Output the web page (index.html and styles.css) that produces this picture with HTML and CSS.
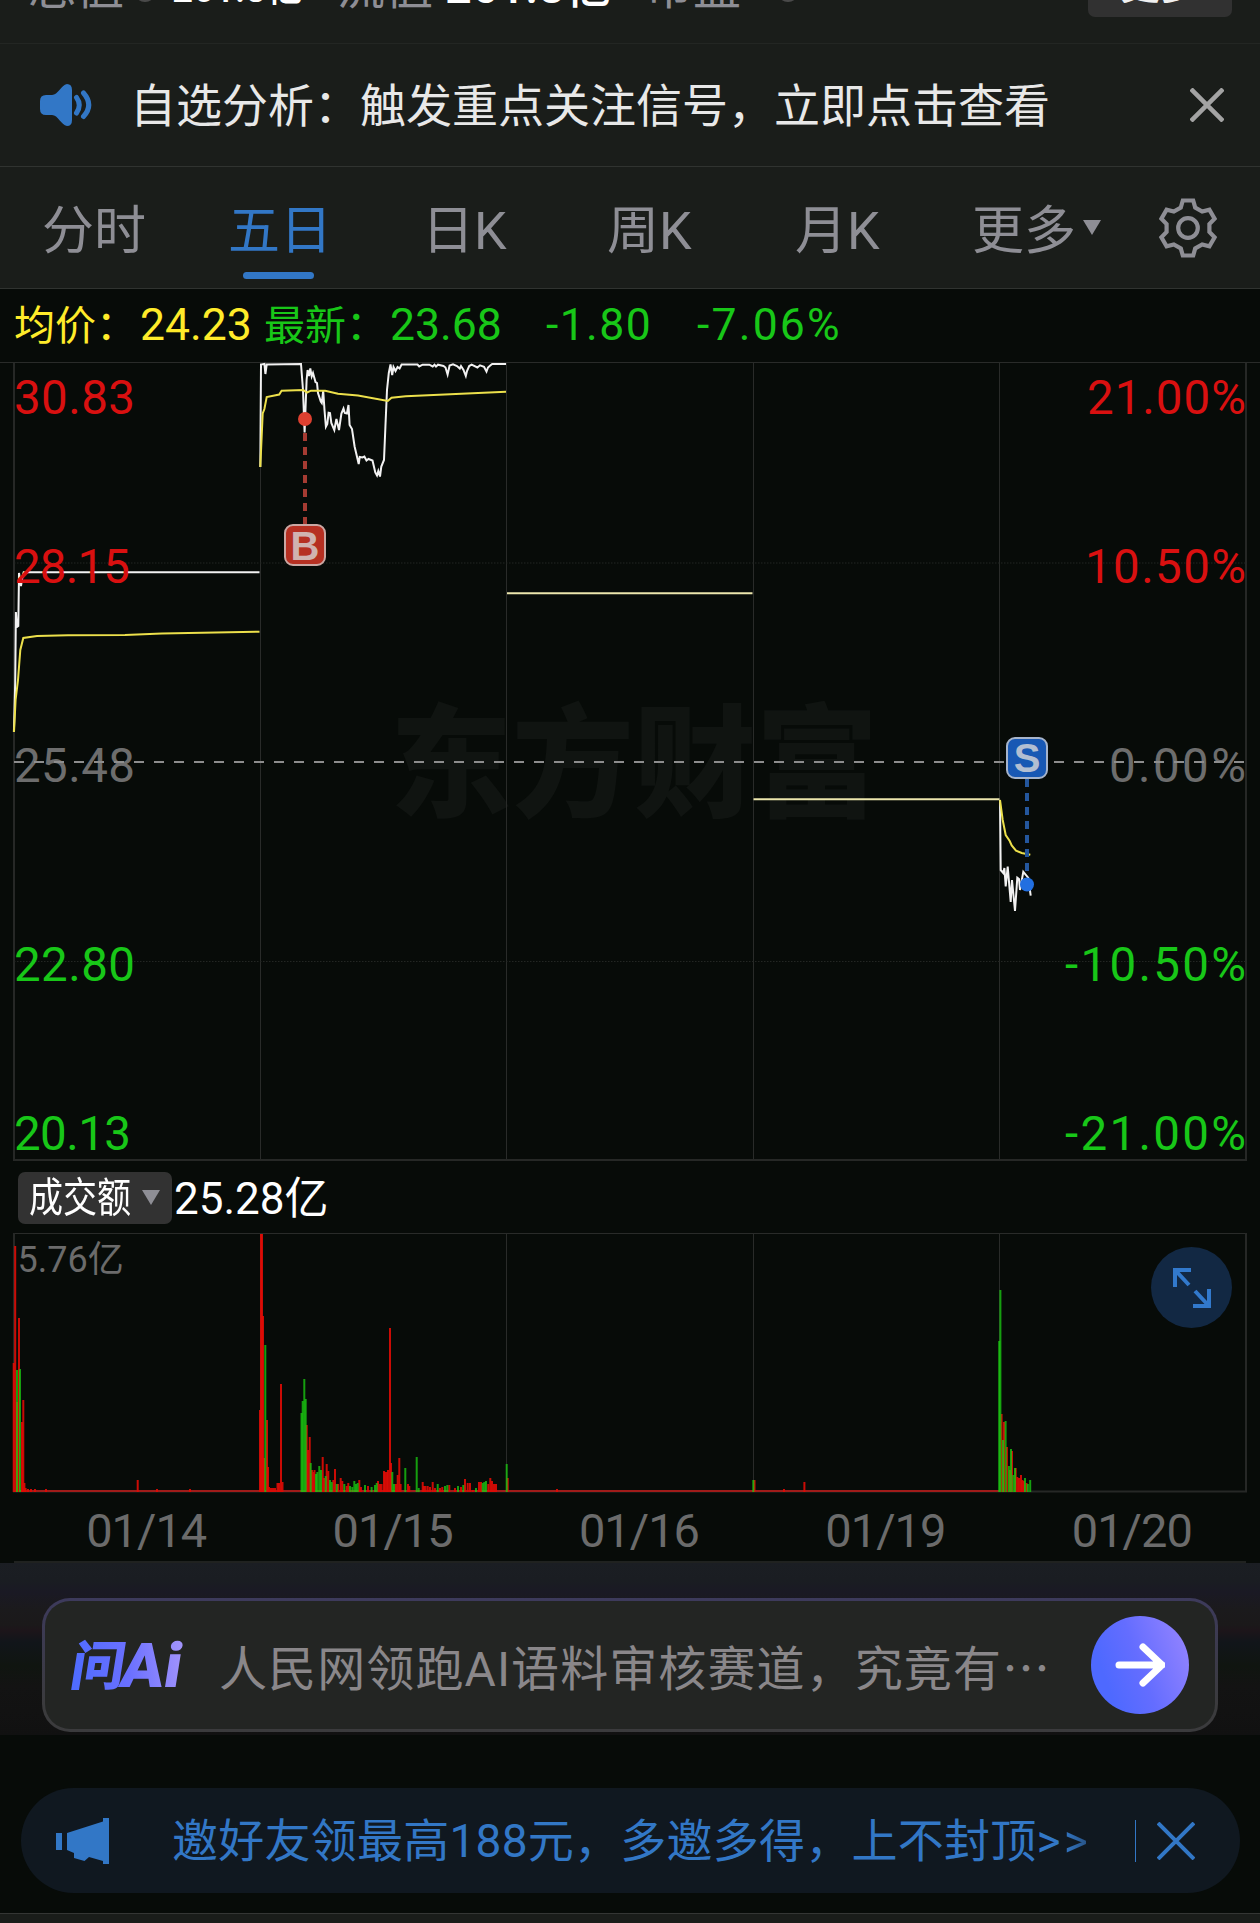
FILE: index.html
```html
<!DOCTYPE html>
<html lang="zh-CN">
<head>
  <meta charset="UTF-8">
  <title>五日分时</title>
  <link rel="stylesheet" href="styles.css">
</head>
<body>

<div class="summary">
  <span class="label">总值</span><i class="info"></i><b class="val small">261.8亿</b>
  <span class="label flow">流值</span><b class="val">261.8亿</b>
  <span class="label pe">市盈</span><i class="info last"></i>
  <span class="more-btn">更多</span>
</div>

<div class="notice">
  <svg class="speaker" viewBox="0 0 52 44" width="52" height="44">
    <path d="M6 12H12C18 12 21 2 27 1Q32 1 32 7V37Q32 43 27 43C21 42 18 32 12 32H6Q0 32 0 26V18Q0 12 6 12Z" fill="#3277c6"/>
    <path d="M36.500 14.500Q42 22 36.500 30M43.500 10Q54 22 43.500 33.500" fill="none" stroke="#3277c6" stroke-width="5" stroke-linecap="round"/>
  </svg>
  <span class="notice-text">自选分析：触发重点关注信号，立即点击查看</span>
  <svg class="close" viewBox="0 0 34 34" width="34" height="34"><path d="M1 1L33 33M33 1L1 33" stroke="#a3a3a3" stroke-width="4.5"/></svg>
</div>

<nav class="tabs">
  <span class="tab">分时</span>
  <span class="tab active">五日</span>
  <span class="tab">日K</span>
  <span class="tab">周K</span>
  <span class="tab">月K</span>
  <span class="tab more">更多<i class="caret"></i></span>
  <svg class="gear" viewBox="-30 -30 60 60" width="60" height="60" fill="none" stroke="#8e8e95" stroke-width="4.2">
    <path d="M-7.2 -20.5L-5.2 -27.5H5.2L7.2 -20.5L14.2 -16.5L21.4 -18.4L26.6 -9.4L21.4 -4V4L26.6 9.4L21.4 18.4L14.2 16.5L7.2 20.5L5.2 27.5H-5.2L-7.2 20.5L-14.2 16.5L-21.4 18.4L-26.6 9.4L-21.4 4V-4L-26.6 -9.4L-21.4 -18.4L-14.2 -16.5Z"/>
    <circle r="9.8"/>
  </svg>
</nav>

<div class="quote">
  <span class="avg">均价：<b>24.23</b></span>
  <span class="last-price">最新：<b>23.68</b></span>
  <span class="diff">-1.80</span>
  <span class="pct">-7.06%</span>
</div>

<svg class="price-chart" viewBox="0 362 1260 800" width="1260" height="800">
  <text class="watermark" x="390" y="807" textLength="488">东方财富</text>
  <!-- grid -->
  <g class="grid">
    <path d="M0 362.5H1260"/>
    <path d="M260.5 363V1160M506.5 363V1160M753.5 363V1160M999.5 363V1160"/>
    <path class="edge" d="M14 363V1160M1246 363V1160M13 1160H1247"/>
    <path class="dots" d="M14 563H1246M14 961.5H1246"/>
  </g>
  <g class="left-labels">
    <text class="up" x="14" y="414" textLength="121">30.83</text>
    <text class="flat" x="14" y="782" textLength="121">25.48</text>
    <text class="down" x="14" y="981" textLength="121">22.80</text>
    <text class="down" x="14" y="1150" textLength="117">20.13</text>
  </g>
  <g class="right-labels">
    <text class="up" x="1087" y="414" textLength="159">21.00%</text>
    <text class="up" x="1085" y="583" textLength="161">10.50%</text>
    <text class="flat" x="1109" y="782" textLength="137">0.00%</text>
    <text class="down" x="1065" y="981" textLength="181">-10.50%</text>
    <text class="down" x="1065" y="1150" textLength="181">-21.00%</text>
  </g>
  <path class="zero" d="M14 762H1246"/>
  <!-- price -->
  <g class="price">
    <polyline points="13.9,732 15.2,683 15.9,612 16.9,627 18.3,626 19,573 21,586 22.3,577 23.7,572.3 259.5,572.3"/>
    <polyline points="260.3,467 261,364.5 264.4,364 265.4,374 266.7,364.5 301,364 303,390 304.6,432.5 306.6,380 307.6,370 309,376 310.3,368.5 311.7,376.5 313,373 315.5,382 317,383 318,393 320.8,401.5 321.8,403 323.2,390.7 324.5,410 325.9,426.7 327.3,424 328.6,412.7 330,413 331.3,423 334.3,430 336.4,419 339,430 341.4,413.5 343.5,408.5 344.8,413 346.9,413.5 348.5,405 349.6,425 352,429 354.6,446.5 358.7,464 359.7,457 362.4,457.5 364.4,456.5 366.5,460.5 368.5,459 372.5,460.5 375.3,472.5 377,475.5 378.3,471 380,476.5 381.3,466.5 384,460 385.4,427 387,390 388.8,373 390.5,364.5 392.2,375 393.5,367 395.5,371 397.6,367 399.6,368.5 401.6,364.5 417.5,364.5 419.2,366.5 422.6,364.7 429.3,364.7 432.7,366.5 434.500,364.7 436,366.500 438,364.700 443.5,366 445.500,367.500 447.6,374.5 449.6,365.5 453,364.3 457,366 459.8,368.5 461,366 463.500,370 465.8,376 467,371 469.2,366 471.6,364.7 477.4,367.5 480,365.3 484,366.7 486.5,371.5 488,367.500 490.2,365.5 492.2,364 506,364"/>
    <polyline points="1000,800 1000.7,870 1003.3,873 1004.4,868 1005.7,886.5 1007.7,866.7 1010.7,902 1012,880 1015,911 1017.3,877.7 1019,879 1020,890 1023.3,871.7 1026,875 1028.3,878 1030.7,895.7"/>
  </g>
  <!-- average -->
  <g class="average">
    <polyline points="14,732 15.6,700 18,680 20.3,650 23.3,638 37,636 68,635.3 125,635 162,633.5 259.5,631.7"/>
    <polyline points="260.3,467 262.7,413.5 264.4,409 266.7,397 279.2,394.5 281.6,390.7 303.2,390 307,392.5 311,390.7 325.2,390.7 338,393.7 358,395.5 387.8,401 391.5,397.7 405.7,396.3 506,391.7"/>
    <polyline points="1000,800 1002.7,820 1005.7,835 1009.7,841 1011.7,845.5 1016,850.7 1021.7,853 1030.3,854.7"/>
  </g>
  <path class="limit" d="M507 593.3H752.5M753.5 799.3H999.5"/>
  <g class="left-labels">
    <text class="up" x="14" y="583" textLength="116">28.15</text>
  </g>
  <!-- trade marks -->
  <g class="buy">
    <path d="M305 433V524"/>
    <circle cx="305" cy="419" r="7"/>
    <rect x="285" y="525" width="40" height="40" rx="8"/>
    <text x="305" y="559.5">B</text>
  </g>
  <g class="sell">
    <path d="M1027 779V872"/>
    <circle cx="1027" cy="884.5" r="7"/>
    <rect x="1007" y="738" width="40" height="40" rx="8"/>
    <text x="1027" y="772">S</text>
  </g>
</svg>

<div class="vol-head">
  <span class="vol-select"><span class="vol-name">成交额</span><i class="caret"></i></span>
  <span class="vol-total">25.28亿</span>
</div>

<div class="vol-wrap">
  <svg class="vol-chart" viewBox="0 1233 1260 260" width="1260" height="260">
    <g class="grid">
      <path d="M13 1233.5H1247M260.5 1233V1491M506.5 1233V1491M753.5 1233V1491M999.5 1233V1491"/>
      <path class="edge" d="M14 1233V1492M1246 1233V1492M13 1491.5H1247"/>
    </g>
    <path class="vol-base" d="M14 1491H999"/>
    <g id="bars"></g>
    <text class="vol-max" x="17.500" y="1271.5">5.76亿</text>
  </svg>
  <span class="expand">
    <svg viewBox="0 0 40 40" width="40" height="40" fill="none" stroke="#3279cc" stroke-width="4">
      <path d="M19 2H3V19M3 2L17 17M21 38H37V21M37 38L23 23"/>
    </svg>
  </span>
</div>

<div class="dates">
  <span>01/14</span><span>01/15</span><span>01/16</span><span>01/19</span><span>01/20</span>
</div>

<div class="ai">
  <div class="ai-card">
    <svg class="ai-logo" viewBox="0 0 116 56" width="116" height="56">
      <defs>
        <linearGradient id="logoFill" gradientUnits="userSpaceOnUse" x1="0" y1="40" x2="116" y2="10">
          <stop offset="0" stop-color="#4f6cff"/><stop offset=".45" stop-color="#6a70ff"/><stop offset="1" stop-color="#ae9bfb"/>
        </linearGradient>
      </defs>
      <g transform="translate(9 0) skewX(-9)" fill="url(#logoFill)">
        <text class="logo-cn" x="-4" y="48" textLength="54" lengthAdjust="spacingAndGlyphs">问</text>
        <text class="logo-en" x="46" y="50" textLength="61" lengthAdjust="spacingAndGlyphs">Ai</text>
      </g>
    </svg>
    <span class="ai-text">人民网领跑AI语料审核赛道，究竟有<span class="dots3">…</span></span>
    <span class="ai-go">
      <svg viewBox="0 0 50 44" width="50" height="44" fill="none" stroke="#fff" stroke-width="7" stroke-linecap="round" stroke-linejoin="round"><path d="M4 22H47M28 4L47 22L28 40"/></svg>
    </span>
  </div>
</div>

<div class="banner">
  <svg class="horn" viewBox="0 0 54 46" width="54" height="46" fill="#3277c6"><path d="M0 15H6V32H0ZM11 15L47 3.5V0H53V46H47V43L33 39L28.500 43L18 40V35L11 32Z"/></svg>
  <span class="banner-text">邀好友领最高188元，多邀多得，上不封顶<span class="arrows">&gt;<span class="fade">&gt;</span></span></span>
  <i class="divider"></i>
  <svg class="banner-close" viewBox="0 0 38 38" width="38" height="38"><path d="M1 1L37 37M37 1L1 37" stroke="#3277c6" stroke-width="4"/></svg>
</div>

<div class="bottom-bar"></div>

<script>
// [x, height] of each bar, up = red, down = green
const BASE = 1492;
const up = [
  [13.7,129],[15.2,246],[17,90],[19,174],[22,70],[23.3,92],[24.4,9],[25.6,4],[28,3],[31,3],[35,3],[46,3],[137.7,12],[157,3],[190,3],
  [260,82],[261,258],[262,258],[263,176],[264,34],[267,72],[268,25],[269,5],[271,4],[273,4],[275,4],[277.5,9],[279,9],[281,108],[282.5,10],
  [306.7,67],[308,42],[309.7,55],[312,22],[313.3,20],[314.5,22],[322.7,35],[324,14],[326.7,28],[328.3,21],[333.3,12],[335,23],[338,8],[340.7,14],[342.3,11],
  [346.7,6],[348.3,9],[359.3,12],[361,5],[368,6],[378,11],[380,8],[381.6,8],[384,21],[385.3,20],[386.7,20],[388,22],[390,164],[391,29],[396,8],[397.7,17],
  [399.3,34],[400.6,8],[408,8],[409.3,6],[422.7,10],[424,6],[425.5,6],[427.7,6],[430,5],[432.7,10],[435,4],[440,4],[442.3,5],[449.3,7],[455,4],[461,5],[465,13],
  [467.7,9],[470,9],[472.7,2],[479,10],[481,10],[488.3,8],[490.3,14],[492,11],[494,8],[496,8],[507.7,14],[557,3],[754.5,12],[784,3],[804.4,10],
  [1001.6,78],[1004,70],[1006.9,45],[1010,22],[1012,41],[1015.7,24],[1017.3,15],[1019,14],[1021,17],[1022.4,12],[1023.7,11],[1026.5,9]
];
const down = [
  [17,122],[20,123],[265.3,147],[301.5,79],[302.7,91],[304.3,113],[305.7,93],[310.7,29],[316,18],[317.3,20],[319.3,26],[321,22],[325.7,16],[330,12],[331.7,10],
  [336.7,8],[344.3,8],[350,6],[352.3,5],[354.3,11],[356,8],[357.7,9],[365,7],[371.6,5],[375,7],[376.7,9],[392.3,20],[394,8],[405.3,24],[416.7,35],[418.7,4],
  [437.7,8],[445,6],[447.3,7],[458,6],[463.3,7],[476,4],[482.7,9],[484.3,10],[486,11],[506.7,28],[753.3,12],
  [999.2,151],[1000.4,202],[1003,52],[1005.6,71],[1008.9,26],[1011,43],[1013.3,17],[1015,24],[1025,14],[1027.8,8],[1030.2,12]
];

function draw(list, cls) {
  return list.map(([x, h]) => `<rect class="${cls}" x="${x - 1}" y="${BASE - h}" width="2" height="${h}"/>`).join('');
}
document.getElementById('bars').innerHTML = draw(up, 'bar-up') + draw(down, 'bar-down');
</script>

</body>
</html>
```

FILE: styles.css
```css
body {
  margin: 0;
  width: 1260px;
  background: #070b08;
  color: #8e8e95;
  font-family: Roboto, "Noto Sans CJK SC", sans-serif;
  overflow-x: hidden;
}
i { font-style: normal; }
b { font-weight: 400; }
svg { display: block; flex: none; }

/* cut off by the scroll position */
.summary {
  height: 44px;
  box-sizing: border-box;
  padding: 0 28px;
  display: flex;
  align-items: flex-start;
  background: #1a1d1a;
  border-bottom: 1px solid #232623;
  overflow: hidden;
  white-space: nowrap;
}
.summary > * {
  margin-top: -47px;
  line-height: 70px;
  flex: none;
}
.label { font-size: 48px; width: 96px; }
.info {
  width: 22px;
  height: 22px;
  margin: -20px 16px 0 10px;
  border-radius: 50%;
  background: #4a4a4a;
}
.val { width: 200px; color: #fff; font-weight: 500; font-size: 47px; margin-top: -48px; }
.val.small { width: 165px; font-size: 37px; margin-top: -45px; }
.flow { width: 108px; }
.info.last { margin-right: 0; margin-left: 36px; }
.summary .more-btn {
  box-sizing: border-box;
  width: 144px;
  height: 70px;
  margin-top: -53px;
  margin-left: auto;
  line-height: 78px;
  border-radius: 7px;
  background: #313131;
  color: #f0f0f0;
  font-size: 40px;
  font-weight: 500;
  text-align: center;
}

.notice {
  height: 123px;
  box-sizing: border-box;
  display: flex;
  align-items: center;
  padding: 0 36px 0 40px;
  background: #1a1d1a;
  border-bottom: 1px solid #303330;
}
.notice-text {
  flex: 1;
  margin-left: 38px;
  padding-bottom: 7px;
  color: #e8e8e8;
  font-size: 46px;
  white-space: nowrap;
}

.tabs {
  height: 122px;
  box-sizing: border-box;
  display: flex;
  align-items: center;
  padding: 0 42px;
  background: #1a1d1a;
  border-bottom: 1px solid #303330;
  font-size: 52px;
}
.tab {
  position: relative;
  width: 186px;
  height: 122px;
  line-height: 130px;
  white-space: nowrap;
}
.tab:nth-child(2) { width: 194px; }
.tab:nth-child(3) { width: 185px; }
.tab:nth-child(4) { width: 188px; }
.tab:nth-child(5) { width: 177px; }
.tab.active { color: #3277c6; }
.tab.active::after {
  content: "";
  position: absolute;
  left: 15px;
  bottom: 10px;
  width: 71px;
  height: 7px;
  border-radius: 4px;
  background: #3277c6;
}
.caret {
  display: inline-block;
  border: 9px solid transparent;
  border-top: 15px solid #8e8e95;
  border-bottom: 0;
}
.tab .caret { margin-left: 7px; vertical-align: 14px; }

.quote {
  height: 73px;
  display: flex;
  align-items: center;
  padding-left: 14px;
  font-size: 41px;
  line-height: 77px;
  color: #18c718;
}
.quote b, .diff, .pct { font-size: 44.500px; }
.quote b { margin-left: 3px; }
.avg { width: 250px; color: #ffeb2a; }
.last-price { width: 282px; }
.diff { width: 151px; letter-spacing: 1.400px; }
.pct { letter-spacing: 2.200px; }

.grid path { fill: none; stroke: #292b29; stroke-width: 1; }
.grid .edge { stroke-width: 2; stroke: #262826; }
.grid .dots { stroke: #232623; stroke-dasharray: 1.5 1.5; }
.watermark {
  font: 900 122px "Noto Sans CJK SC", sans-serif;
  fill: #101411;
}
.left-labels text, .right-labels text { font-size: 47.5px; }
.up { fill: #d91010; }
.down { fill: #18c718; }
.flat { fill: #6d6d6d; }
.zero { stroke: #8d8d8d; stroke-width: 2; stroke-dasharray: 10 10; }
.price polyline, .average polyline { fill: none; stroke-width: 2; }
.price polyline { stroke: #f2f2f2; }
.average polyline { stroke: #ece04b; }
.limit { stroke: #ece6ad; stroke-width: 2; }
.buy path, .sell path { stroke: #a53b32; stroke-width: 4; stroke-dasharray: 8 6; }
.buy circle { fill: #dd4030; }
.buy rect { fill: #b63022; stroke: #caa7a3; stroke-width: 2; }
.buy text, .sell text {
  font: 700 40px "Liberation Sans", sans-serif;
  text-anchor: middle;
  fill: #d0b3b0;
}
.sell path { stroke: #24579d; }
.sell circle { fill: #226fe0; }
.sell rect { fill: #1858b4; stroke: #a6b4cb; stroke-width: 2; }
.sell text { fill: #b2bed2; }

.vol-head {
  height: 71px;
  display: flex;
  align-items: center;
  padding-left: 18px;
}
.vol-select {
  width: 154px;
  height: 52px;
  display: flex;
  align-items: center;
  border-radius: 7px;
  background: #323232;
  color: #fff;
}
.vol-name {
  width: 112px;
  margin-left: 11px;
  font-size: 41px;
  line-height: 52px;
  white-space: nowrap;
  transform: scaleX(.83);
  transform-origin: 0 50%;
}
.vol-select .caret { margin-left: 1px; }
.vol-total {
  margin-left: 2px;
  padding-top: 3px;
  color: #fff;
  font-size: 44px;
  line-height: 52px;
  white-space: nowrap;
}

.vol-wrap { position: relative; height: 260px; }
.vol-base { stroke: #a01c1a; stroke-width: 2; }
.bar-up { fill: #e00b06; fill-opacity: .9; }
.bar-down { fill: #1bd012; fill-opacity: .75; }
.vol-max { font-size: 36px; fill: #6b6b6b; }
.expand {
  position: absolute;
  right: 28px;
  top: 14px;
  width: 81px;
  height: 81px;
  display: flex;
  align-items: center;
  justify-content: center;
  border-radius: 50%;
  background: #122843;
}

.dates {
  height: 68px;
  margin: 0 14px;
  display: grid;
  grid-template-columns: repeat(5, 1fr);
  border-bottom: 2px solid #202220;
  color: #6b6b6b;
  font-size: 47px;
  letter-spacing: -1px;
  line-height: 75px;
  text-align: center;
}
.dates span { padding-left: 18px; }

.ai {
  height: 172px;
  box-sizing: border-box;
  padding: 35px 42px 0;
  background: linear-gradient(#1b1e23 0, #1a1d22 10%, #1a1924 17%, #1b1a1c 27%, #1b191a 36%, #1d151a 39%, #11151a 46%, #101510 60%, #131313 72%, #111 100%);
}
.ai-card {
  height: 134px;
  box-sizing: border-box;
  display: flex;
  align-items: center;
  padding: 0 26px;
  border: 3px solid transparent;
  border-radius: 28px;
  background: linear-gradient(#232523, #232523) padding-box, linear-gradient(#3d3a5c, #3b3b3d 80%) border-box;
}
.logo-cn { font: 900 53px "Noto Sans CJK SC", sans-serif; }
.logo-en { font: 900 62px Roboto, sans-serif; }
.ai-text {
  flex: 1;
  margin-left: 32px;
  font-size: 48px;
  letter-spacing: 1.1px;
  color: #8a878a;
  white-space: nowrap;
}
.dots3 { font-family: "Noto Sans CJK SC", sans-serif; }
.ai-go {
  width: 98px;
  height: 98px;
  flex: none;
  display: flex;
  align-items: center;
  justify-content: center;
  border-radius: 50%;
  background: linear-gradient(70deg, #4e69ff 20%, #646dff 50%, #9484ff 95%);
}

.banner {
  height: 105px;
  margin: 53px 20px 0 21px;
  box-sizing: border-box;
  display: flex;
  align-items: center;
  padding: 0 45px 0 35px;
  border-radius: 53px;
  background: #101820;
  color: #3277c6;
}
.banner-text {
  flex: 1;
  margin-left: 62px;
  padding-bottom: 7px;
  font-size: 46px;
  letter-spacing: .25px;
  white-space: nowrap;
}
.arrows { letter-spacing: 3px; }
.fade {
  background: linear-gradient(90deg, #3277c6, #274e7c);
  -webkit-background-clip: text;
  background-clip: text;
  color: transparent;
}
.divider { width: 1px; height: 42px; margin-right: 21px; background: #3277c6; }

.bottom-bar {
  height: 9px;
  margin-top: 20px;
  border-top: 1px solid #343634;
  background: #1a1d1a;
}
```
